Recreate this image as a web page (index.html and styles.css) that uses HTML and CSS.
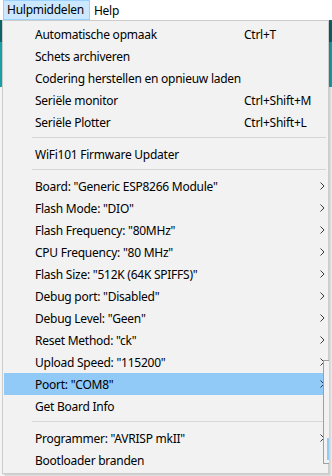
FILE: index.html
```html
<!DOCTYPE html>
<html lang="en">
<head>
    <meta charset="UTF-8">
    <title>Hulpmiddelen</title>
    <link rel="stylesheet" href="styles.css">
</head>
<body>
    <div class="menubar">
        <div class="menubar-item active">Hulpmiddelen</div>
        <div class="menubar-item">Help</div>
    </div>

    <div class="menu">
        <div class="item"><span>Automatische opmaak</span><span class="key">Ctrl+T</span></div>
        <div class="item"><span>Schets archiveren</span></div>
        <div class="item"><span>Codering herstellen en opnieuw laden</span></div>
        <div class="item"><span>Seriële monitor</span><span class="key">Ctrl+Shift+M</span></div>
        <div class="item"><span>Seriële Plotter</span><span class="key">Ctrl+Shift+L</span></div>
        <div class="sep"></div>
        <div class="item"><span>WiFi101 Firmware Updater</span></div>
        <div class="sep"></div>
        <div class="item sub"><span>Board: "Generic ESP8266 Module"</span></div>
        <div class="item sub"><span>Flash Mode: "DIO"</span></div>
        <div class="item sub"><span>Flash Frequency: "80MHz"</span></div>
        <div class="item sub"><span>CPU Frequency: "80 MHz"</span></div>
        <div class="item sub"><span>Flash Size: "512K (64K SPIFFS)"</span></div>
        <div class="item sub"><span>Debug port: "Disabled"</span></div>
        <div class="item sub"><span>Debug Level: "Geen"</span></div>
        <div class="item sub"><span>Reset Method: "ck"</span></div>
        <div class="item sub"><span>Upload Speed: "115200"</span></div>
        <div class="item sub selected"><span>Poort: "COM8"</span></div>
        <div class="item"><span>Get Board Info</span></div>
        <div class="sep"></div>
        <div class="item sub"><span>Programmer: "AVRISP mkII"</span></div>
        <div class="item"><span>Bootloader branden</span></div>

        <!-- port submenu, mostly off screen -->
        <div class="submenu">
            <div class="subrow selected"></div>
        </div>
    </div>

    <script>
        // chevron for items that open a submenu
        const chevron = '<svg width="5" height="8" viewBox="0 0 5 8"><polyline points="0.5,0.5 4,4 0.5,7.5" fill="none" stroke="#3c3c3c" stroke-width="1"/></svg>';
        document.querySelectorAll('.item.sub').forEach(item => {
            const arrow = document.createElement('span');
            arrow.className = 'arrow';
            arrow.innerHTML = chevron;
            item.appendChild(arrow);
        });
    </script>
</body>
</html>
```

FILE: styles.css
```css
* {
    margin: 0;
    padding: 0;
    box-sizing: border-box;
}

body {
    font-family: "Noto Sans", "Open Sans", sans-serif;
    font-size: 12px;
    letter-spacing: -0.25px;
    color: #000;
    width: 332px;
    height: 476px;
    overflow: hidden;
    /* bits of the IDE window showing behind the menu */
    background: linear-gradient(to bottom,
        #ffffff 0, #ffffff 20px,
        #0b6467 20px, #0b6467 42px,
        #17a1a5 42px, #17a1a5 87px,
        #f4f4f4 87px, #f4f4f4 100%);
}

/* Menu bar */
.menubar {
    height: 20px;
    background: #fff;
    display: flex;
    padding-left: 3px;
}

.menubar-item {
    padding: 0 4px 0 3px;
    line-height: 19px;
    border: 1px solid transparent;
}

.menubar-item.active {
    background: #cce8ff;
    border-color: #99d1ff;
    line-height: 18px;
    padding-right: 5px;
}

/* Dropdown */
.menu {
    position: relative;
    margin-left: 2px;
    width: 327px;
    background: #f2f2f2;
    border: 1px solid #cccccc;
    padding: 2px 2px 2px 1px;
    box-shadow: 2px 2px 2px rgba(0,0,0,0.15);
}

.item {
    display: grid;
    grid-template-columns: 209px 1fr 6px;
    align-items: center;
    height: 22px;
    padding-left: 31px;
    white-space: nowrap;
}

.item.selected {
    background: #91c9f7;
}

.key {
    grid-column: 2;
}

.arrow {
    grid-column: 3;
    display: flex;
    align-items: center;
}

.sep {
    height: 10px;
    margin-left: 28px;
    position: relative;
}

.sep::after {
    content: "";
    position: absolute;
    left: 0;
    right: 0;
    top: 4px;
    border-top: 1px solid #d7d7d7;
}

.submenu {
    position: absolute;
    left: 320px;
    top: 339px;
    width: 6px;
    height: 104px;
    background: #f2f2f2;
    border: 1px solid #a0a0a0;
    border-right: none;
    padding: 77px 0 0 3px;
}

.subrow {
    height: 22px;
}

.subrow.selected {
    background: #91c9f7;
}
```
